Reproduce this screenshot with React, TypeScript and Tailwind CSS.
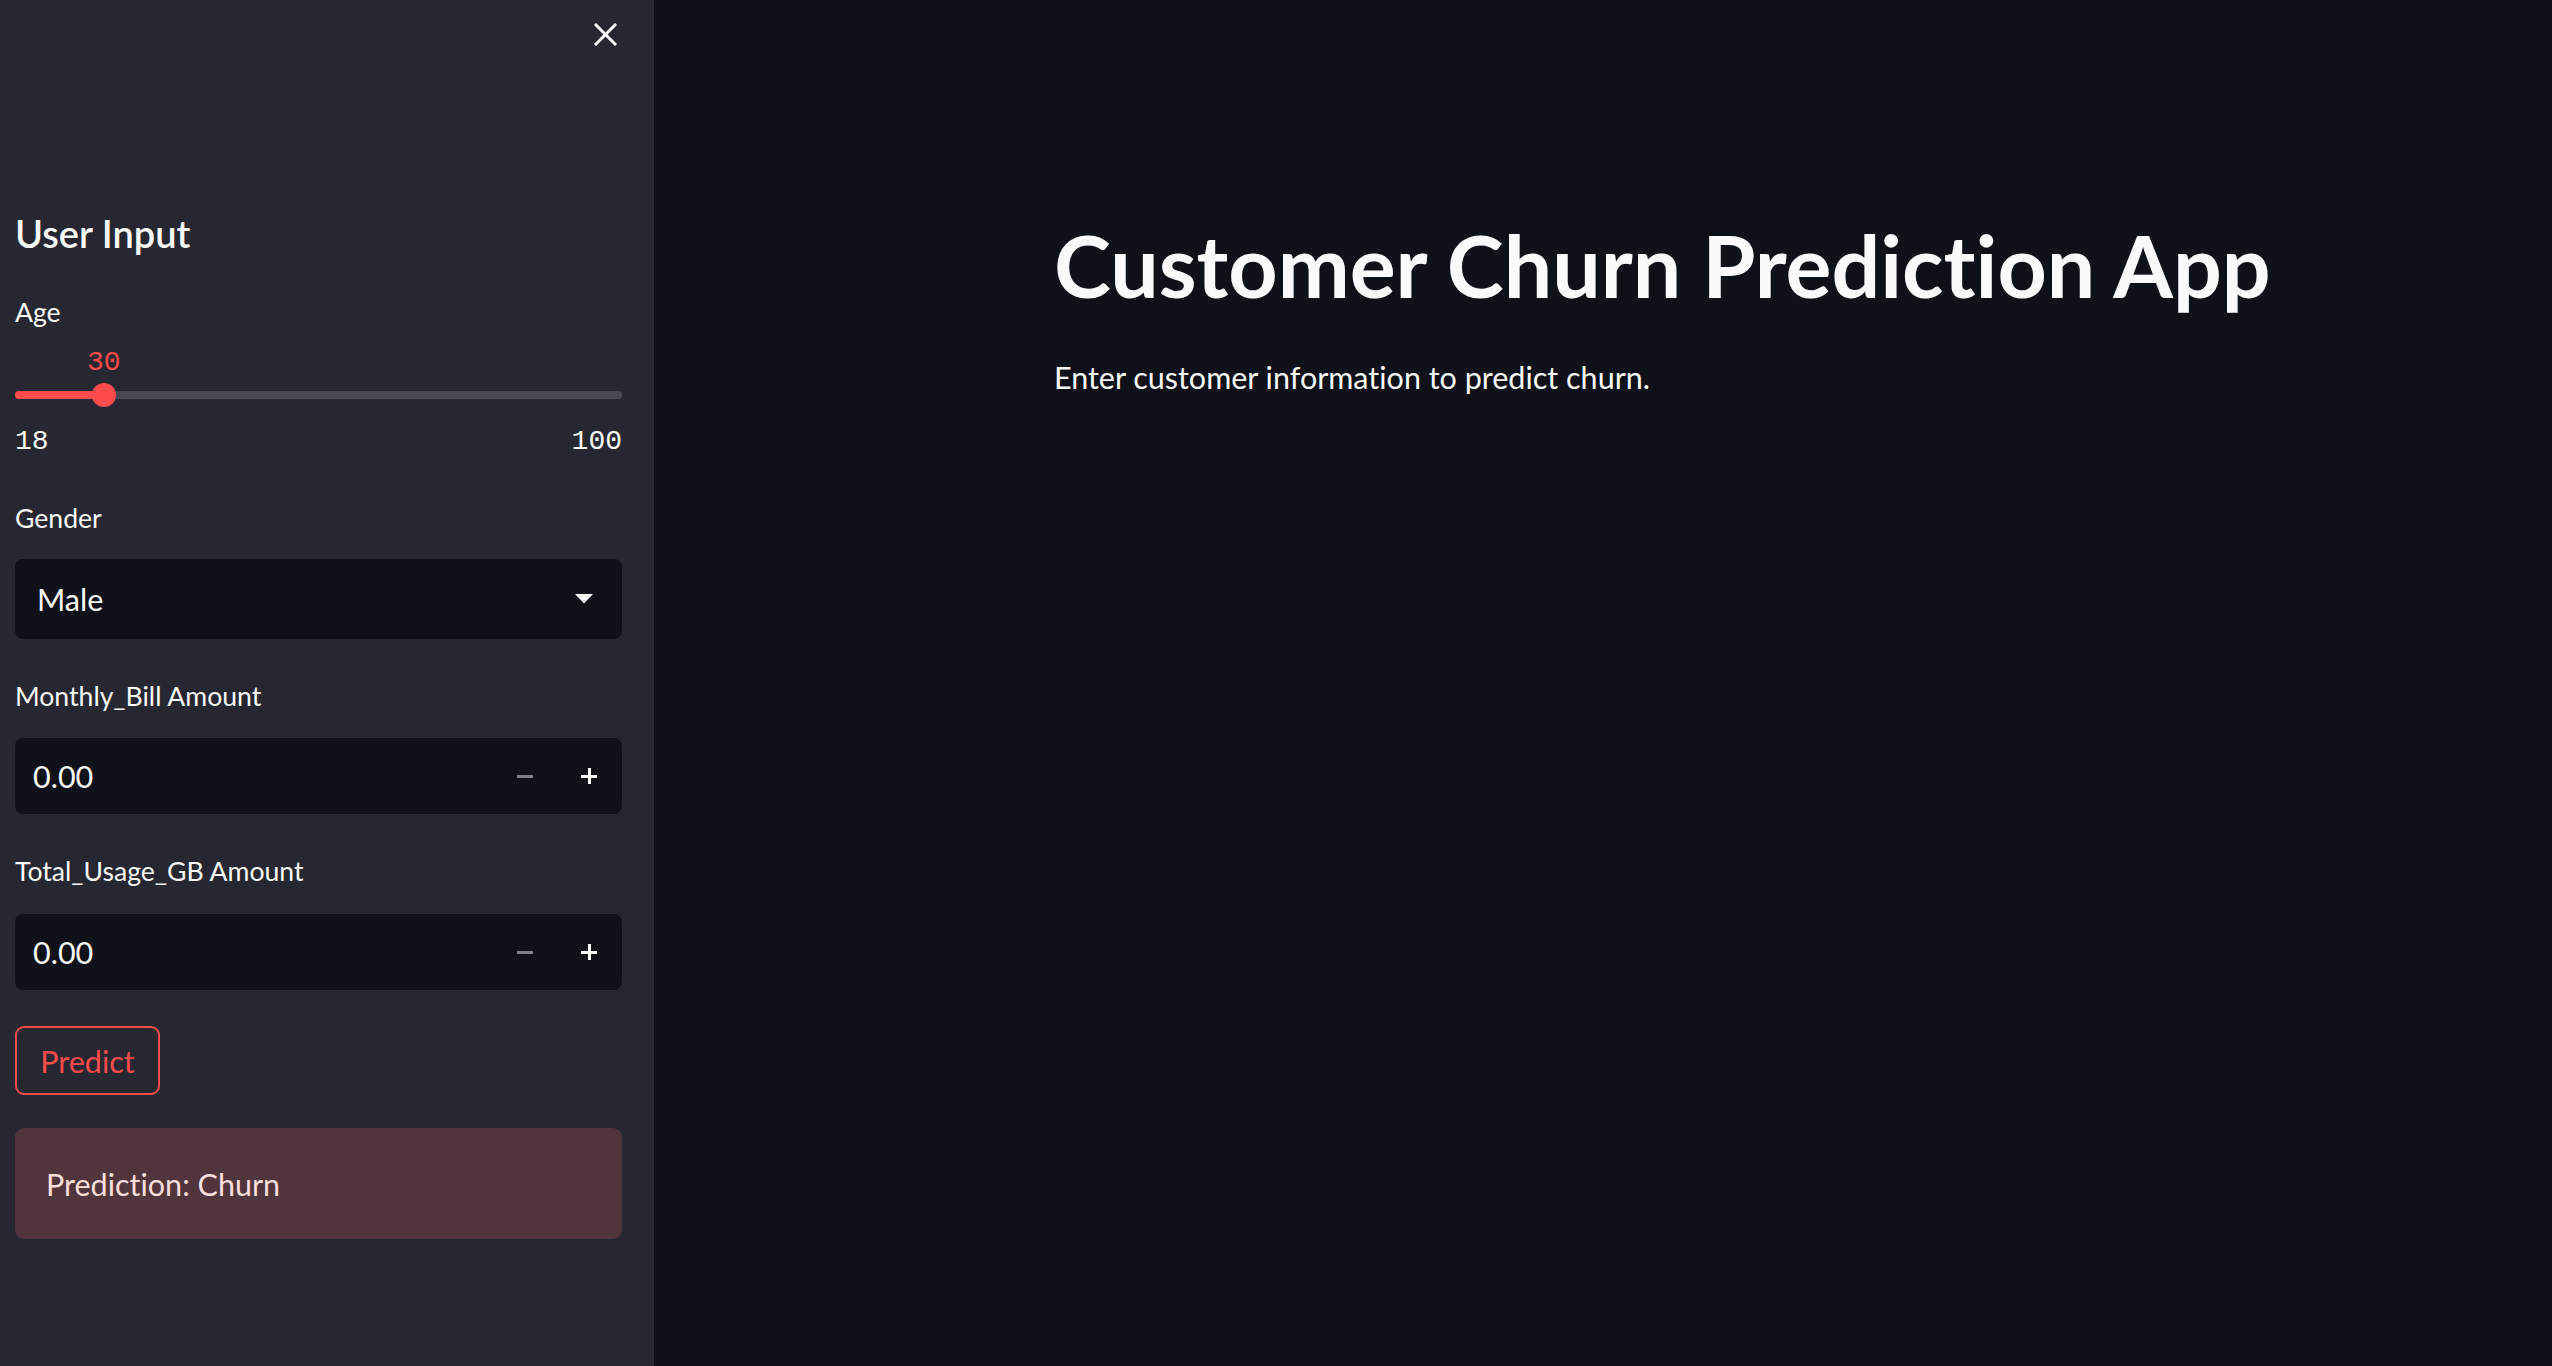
const sans = "font-['Lato',sans-serif] [font-variant-ligatures:none]";
const mono = "font-['Liberation_Mono',monospace]";

function FieldLabel({ text, mt }: { text: string; mt: string }) {
  return <div className={`${mt} h-[40px] text-[26.6px] leading-[40px] text-[#fafafa]`}>{text}</div>;
}

function NumberInput({ value, mt }: { value: string; mt: string }) {
  return (
    <div className={`${mt} flex h-[76px] items-center rounded-[8px] bg-[#0e1117] pl-[18px] pr-[25px]`}>
      <span className="flex-1 text-[30.5px] leading-[48px] text-[#fafafa]">{value}</span>
      <div className="flex items-center gap-[48px]">
        <span className="block h-[3px] w-[16px] bg-[#7c7e89]" />
        <span className="relative block h-[16px] w-[16px]">
          <span className="absolute left-0 top-[6.5px] block h-[3px] w-[16px] bg-white" />
          <span className="absolute left-[6.5px] top-0 block h-[16px] w-[3px] bg-white" />
        </span>
      </div>
    </div>
  );
}

export default function App() {
  const pct = (30 - 18) / (100 - 18);
  return (
    <div className={`flex h-[1366px] w-full ${sans} text-[#fafafa]`}>
      <aside className="flex w-[654px] shrink-0 flex-col bg-[#262730]">
        <div className="flex h-[68px] justify-end pr-[37px] pt-[23px]">
          <svg width="23" height="23" viewBox="0 0 23 23">
            <path d="M2 2 L21 21 M21 2 L2 21" stroke="#ffffff" strokeWidth="3" strokeLinecap="square" />
          </svg>
        </div>
        <div className="flex w-[622px] flex-col pl-[15px]">
          <h2 className="mt-[141px] h-[48px] text-[38px] font-semibold leading-[48px]">User Input</h2>

          <FieldLabel text="Age" mt="mt-[35px]" />
          <div className="mt-[15px]">
            <div className={`h-[32px] pl-[72px] text-[28px] leading-[32px] text-[#ff4b4b] ${mono}`}>30</div>
            <div className="relative flex h-[32px] items-center">
              <div className="h-[8px] w-full rounded-full bg-[#474955]" />
              <div
                className="absolute left-0 top-[12px] h-[8px] rounded-full bg-[#ff4b4b]"
                style={{ width: `${pct * 100}%` }}
              />
              <div
                className="absolute top-[4px] h-[24px] w-[24px] -translate-x-1/2 rounded-full bg-[#ff4b4b]"
                style={{ left: `${pct * 100}%` }}
              />
            </div>
            <div className={`mt-[15px] flex h-[32px] justify-between text-[28px] leading-[32px] ${mono}`}>
              <span>18</span>
              <span>100</span>
            </div>
          </div>

          <FieldLabel text="Gender" mt="mt-[40px]" />
          <div className="mt-[21px] flex h-[80px] items-center justify-between rounded-[8px] bg-[#0e1117] pl-[22px] pr-[29px]">
            <span className="text-[30.5px] leading-[48px]">Male</span>
            <svg width="18" height="10" viewBox="0 0 18 10">
              <path d="M0 0 L18 0 L9 9.5 Z" fill="#fafafa" />
            </svg>
          </div>

          <FieldLabel text="Monthly_Bill Amount" mt="mt-[37px]" />
          <NumberInput value="0.00" mt="mt-[22px]" />

          <FieldLabel text="Total_Usage_GB Amount" mt="mt-[37px]" />
          <NumberInput value="0.00" mt="mt-[23px]" />

          <button className="mt-[36px] flex h-[69px] w-[145px] items-center justify-center rounded-[9px] border-2 border-[#ff4b4b] text-[30.5px] leading-[48px] text-[#ff4b4b]">
            Predict
          </button>

          <div className="mt-[33px] flex h-[111px] items-center rounded-[9px] bg-[#51353c] px-[31px] text-[30.5px] leading-[48px] text-[#ffdede]">
            Prediction: Churn
          </div>
        </div>
      </aside>

      <main className="flex-1 bg-[#0e1117]">
        <div className="pl-[400px] pt-[213px]">
          <h1 className="h-[104px] text-[86px] font-bold leading-[104px] text-[#fafafa]">Customer Churn Prediction App</h1>
          <p className="mt-[36px] text-[30.5px] leading-[48px] text-[#fafafa]">Enter customer information to predict churn.</p>
        </div>
      </main>
    </div>
  );
}
